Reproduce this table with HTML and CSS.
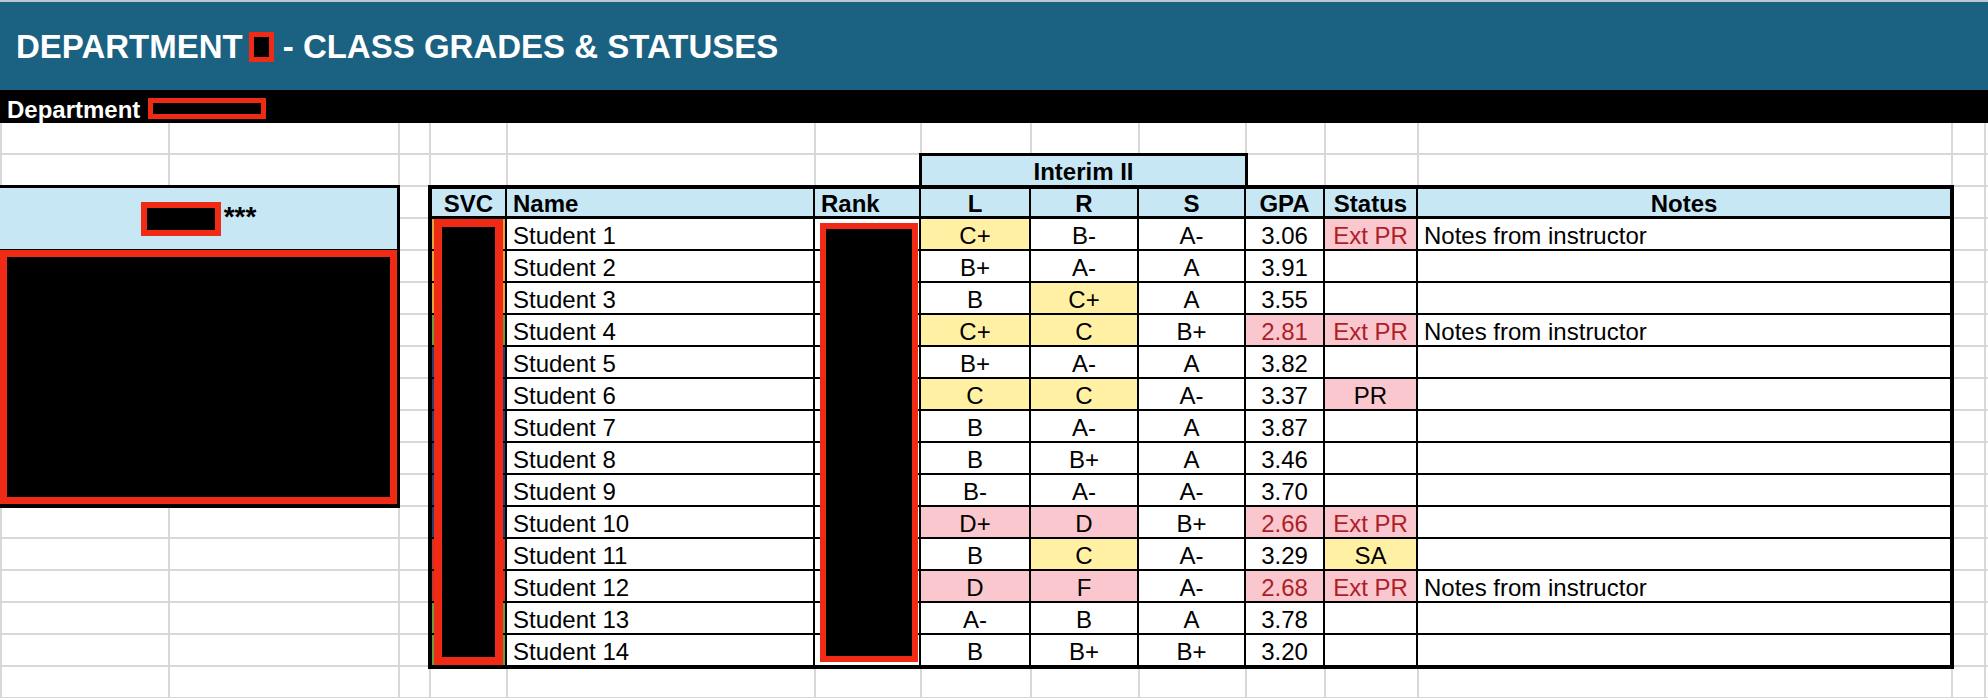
FILE: index.html
```html
<!DOCTYPE html>
<html lang="en">
<head>
<meta charset="utf-8">
<title>Department - Class Grades &amp; Statuses</title>
<link rel="stylesheet" href="styles.css">
</head>
<body>
<header class="title-band">
  <h1 class="title"><span>DEPARTMENT</span><span class="redact redact-title"></span><span>- CLASS GRADES &amp; STATUSES</span></h1>
</header>
<div class="dept-band"><span class="dept-label">Department</span><span class="redact redact-dept"></span></div>
<main class="sheet">
  <section class="panel">
    <div class="panel-head"><span class="redact redact-head"></span><span class="stars">***</span></div>
    <div class="panel-body"><div class="redact redact-panel"></div></div>
  </section>
  <section class="grades">
    <div class="interim-row"><div class="interim">Interim II</div></div>
    <div class="tbl">
      <div class="c h svc">SVC</div><div class="c h left">Name</div><div class="c h left">Rank</div><div class="c h">L</div><div class="c h">R</div><div class="c h">S</div><div class="c h">GPA</div><div class="c h">Status</div><div class="c h notes-h">Notes</div>

      <div class="c svc o"></div><div class="c left">Student 1</div><div class="c"></div><div class="c y">C+</div><div class="c">B-</div><div class="c">A-</div><div class="c">3.06</div><div class="c p bad">Ext PR</div><div class="c left last">Notes from instructor</div>
      <div class="c svc o"></div><div class="c left">Student 2</div><div class="c"></div><div class="c">B+</div><div class="c">A-</div><div class="c">A</div><div class="c">3.91</div><div class="c"></div><div class="c left last"></div>
      <div class="c svc o"></div><div class="c left">Student 3</div><div class="c"></div><div class="c">B</div><div class="c y">C+</div><div class="c">A</div><div class="c">3.55</div><div class="c"></div><div class="c left last"></div>
      <div class="c svc g"></div><div class="c left">Student 4</div><div class="c"></div><div class="c y">C+</div><div class="c y">C</div><div class="c">B+</div><div class="c p bad">2.81</div><div class="c p bad">Ext PR</div><div class="c left last">Notes from instructor</div>
      <div class="c svc n"></div><div class="c left">Student 5</div><div class="c"></div><div class="c">B+</div><div class="c">A-</div><div class="c">A</div><div class="c">3.82</div><div class="c"></div><div class="c left last"></div>
      <div class="c svc n"></div><div class="c left">Student 6</div><div class="c"></div><div class="c y">C</div><div class="c y">C</div><div class="c">A-</div><div class="c">3.37</div><div class="c p">PR</div><div class="c left last"></div>
      <div class="c svc n"></div><div class="c left">Student 7</div><div class="c"></div><div class="c">B</div><div class="c">A-</div><div class="c">A</div><div class="c">3.87</div><div class="c"></div><div class="c left last"></div>
      <div class="c svc n"></div><div class="c left">Student 8</div><div class="c"></div><div class="c">B</div><div class="c">B+</div><div class="c">A</div><div class="c">3.46</div><div class="c"></div><div class="c left last"></div>
      <div class="c svc n"></div><div class="c left">Student 9</div><div class="c"></div><div class="c">B-</div><div class="c">A-</div><div class="c">A-</div><div class="c">3.70</div><div class="c"></div><div class="c left last"></div>
      <div class="c svc n"></div><div class="c left">Student 10</div><div class="c"></div><div class="c p">D+</div><div class="c p">D</div><div class="c">B+</div><div class="c p bad">2.66</div><div class="c p bad">Ext PR</div><div class="c left last"></div>
      <div class="c svc r"></div><div class="c left">Student 11</div><div class="c"></div><div class="c">B</div><div class="c y">C</div><div class="c">A-</div><div class="c">3.29</div><div class="c y">SA</div><div class="c left last"></div>
      <div class="c svc r"></div><div class="c left">Student 12</div><div class="c"></div><div class="c p">D</div><div class="c p">F</div><div class="c">A-</div><div class="c p bad">2.68</div><div class="c p bad">Ext PR</div><div class="c left last">Notes from instructor</div>
      <div class="c svc g"></div><div class="c left">Student 13</div><div class="c"></div><div class="c">A-</div><div class="c">B</div><div class="c">A</div><div class="c">3.78</div><div class="c"></div><div class="c left last"></div>
      <div class="c svc g"></div><div class="c left">Student 14</div><div class="c"></div><div class="c">B</div><div class="c">B+</div><div class="c">B+</div><div class="c">3.20</div><div class="c"></div><div class="c left last"></div>

      <div class="redact redact-svc"></div>
      <div class="redact redact-rank"></div>
    </div>
  </section>
</main>
</body>
</html>
```

FILE: styles.css
```css
* { box-sizing: border-box; }

html, body {
  margin: 0;
  padding: 0;
  background: #ffffff;
  overflow: hidden;
}

body {
  width: 1988px;
  height: 698px;
  font-family: "Liberation Sans", Arial, sans-serif;
  color: #000;
}

/* ---------- bands ---------- */
.title-band {
  height: 90px;
  border-top: 2px solid #bcc6ce;
  background: #1a6182;
  display: flex;
  align-items: center;
  padding-left: 16px;
}

.title {
  margin: 0;
  display: flex;
  align-items: center;
  gap: 6px;
  font-size: 33px;
  font-weight: bold;
  color: #ffffff;
  padding-top: 2px;
}

.redact {
  background: #000;
  border: 5px solid #ef2b16;
}

.redact-title {
  display: inline-block;
  width: 25px;
  height: 30px;
  border-width: 5px;
  margin-right: 3px;
}

.dept-band {
  height: 33px;
  background: #000;
  display: flex;
  align-items: center;
  padding-left: 7px;
  gap: 8px;
}

.dept-label {
  color: #fff;
  font-weight: bold;
  font-size: 24px;
  padding-top: 6px;
}

.redact-dept {
  display: inline-block;
  width: 118px;
  height: 21px;
  margin-top: 4px;
}

/* ---------- spreadsheet ---------- */
.sheet {
  display: grid;
  grid-template-columns: 169px 230px 31px 1522px 33px 1fr;
  grid-template-rows: repeat(18, 32px);
  height: 575px;
  background:
    repeating-linear-gradient(to bottom, transparent 0 30px, #d8d8d8 30px 32px),
    linear-gradient(#d8d8d8, #d8d8d8) 0 0 / 2px 100% no-repeat,
    linear-gradient(#d8d8d8, #d8d8d8) 168px 0 / 2px 100% no-repeat,
    linear-gradient(#d8d8d8, #d8d8d8) 398px 0 / 2px 100% no-repeat,
    linear-gradient(#d8d8d8, #d8d8d8) 429px 0 / 2px 100% no-repeat,
    linear-gradient(#d8d8d8, #d8d8d8) 506px 0 / 2px 100% no-repeat,
    linear-gradient(#d8d8d8, #d8d8d8) 814px 0 / 2px 100% no-repeat,
    linear-gradient(#d8d8d8, #d8d8d8) 920px 0 / 2px 100% no-repeat,
    linear-gradient(#d8d8d8, #d8d8d8) 1030px 0 / 2px 100% no-repeat,
    linear-gradient(#d8d8d8, #d8d8d8) 1138px 0 / 2px 100% no-repeat,
    linear-gradient(#d8d8d8, #d8d8d8) 1245px 0 / 2px 100% no-repeat,
    linear-gradient(#d8d8d8, #d8d8d8) 1324px 0 / 2px 100% no-repeat,
    linear-gradient(#d8d8d8, #d8d8d8) 1417px 0 / 2px 100% no-repeat,
    linear-gradient(#d8d8d8, #d8d8d8) 1951px 0 / 2px 100% no-repeat,
    linear-gradient(#d8d8d8, #d8d8d8) 1984px 0 / 2px 100% no-repeat,
    #ffffff;
}

/* left panel */
.panel {
  grid-column: 1 / 3;
  grid-row: 3 / 13;
  margin: -2px -1px -1px 0;
  display: flex;
  flex-direction: column;
  background: #fff;
  border-top: 3px solid #000;
  border-right: 3px solid #000;
  border-bottom: 4px solid #000;
}

.panel-head {
  height: 62px;
  flex: none;
  background: #c8e7f5;
  border-bottom: 1px solid #000;
  display: flex;
  align-items: center;
  justify-content: center;
}

.redact-head {
  display: inline-block;
  width: 80px;
  height: 34px;
  border-width: 6px;
}

.stars {
  font-size: 28px;
  font-weight: bold;
  line-height: 28px;
  margin-left: 3px;
  margin-top: -4px;
}

.panel-body {
  flex: 1;
  display: flex;
}

.redact-panel {
  flex: 1;
  border-width: 7px;
}

/* grades block */
.grades {
  grid-column: 4;
  grid-row: 2 / 18;
  display: flex;
  flex-direction: column;
}

.interim-row {
  height: 32px;
  flex: none;
  display: flex;
  align-items: flex-end;
}

.interim {
  margin-left: 489px;
  width: 329px;
  height: 34px;
  background: #c8e7f5;
  border: 3px solid #000;
  border-bottom: none;
  font-size: 24px;
  font-weight: bold;
  text-align: center;
  line-height: 27px;
  padding-top: 2px;
}

.tbl {
  position: relative;
  display: grid;
  grid-template-columns: 77px 308px 106px 110px 108px 107px 79px 93px 534px;
  grid-auto-rows: 32px;
  background: #fff;
  box-shadow: 0 0 0 2px #000;
}

.c {
  border-right: 2px solid #000;
  border-bottom: 2px solid #000;
  font-size: 24px;
  line-height: 27px;
  padding-top: 3px;
  text-align: center;
  white-space: nowrap;
  overflow: hidden;
}

.c.left {
  text-align: left;
  padding-left: 6px;
}

.c.h {
  background: #c8e7f5;
  font-weight: bold;
  border-top: 2px solid #000;
  border-bottom: 3px solid #000;
  padding-top: 2px;
  line-height: 25px;
}

.c.svc {
  border-left: 2px solid #000;
}

.c.svc.o { background: #e6a43b; }
.c.svc.g { background: #6b9d3f; }
.c.svc.n { background: #243f6b; }
.c.svc.r { background: #c8332c; }

.c.y { background: #fff0a3; }
.c.p { background: #fac7ce; }
.c.bad { color: #ac1f28; }

.redact-svc {
  position: absolute;
  left: 4px;
  top: 32px;
  width: 69px;
  height: 446px;
  border-width: 8px;
}

.redact-rank {
  position: absolute;
  left: 390px;
  top: 36px;
  width: 98px;
  height: 439px;
  border-width: 6px;
}
```
